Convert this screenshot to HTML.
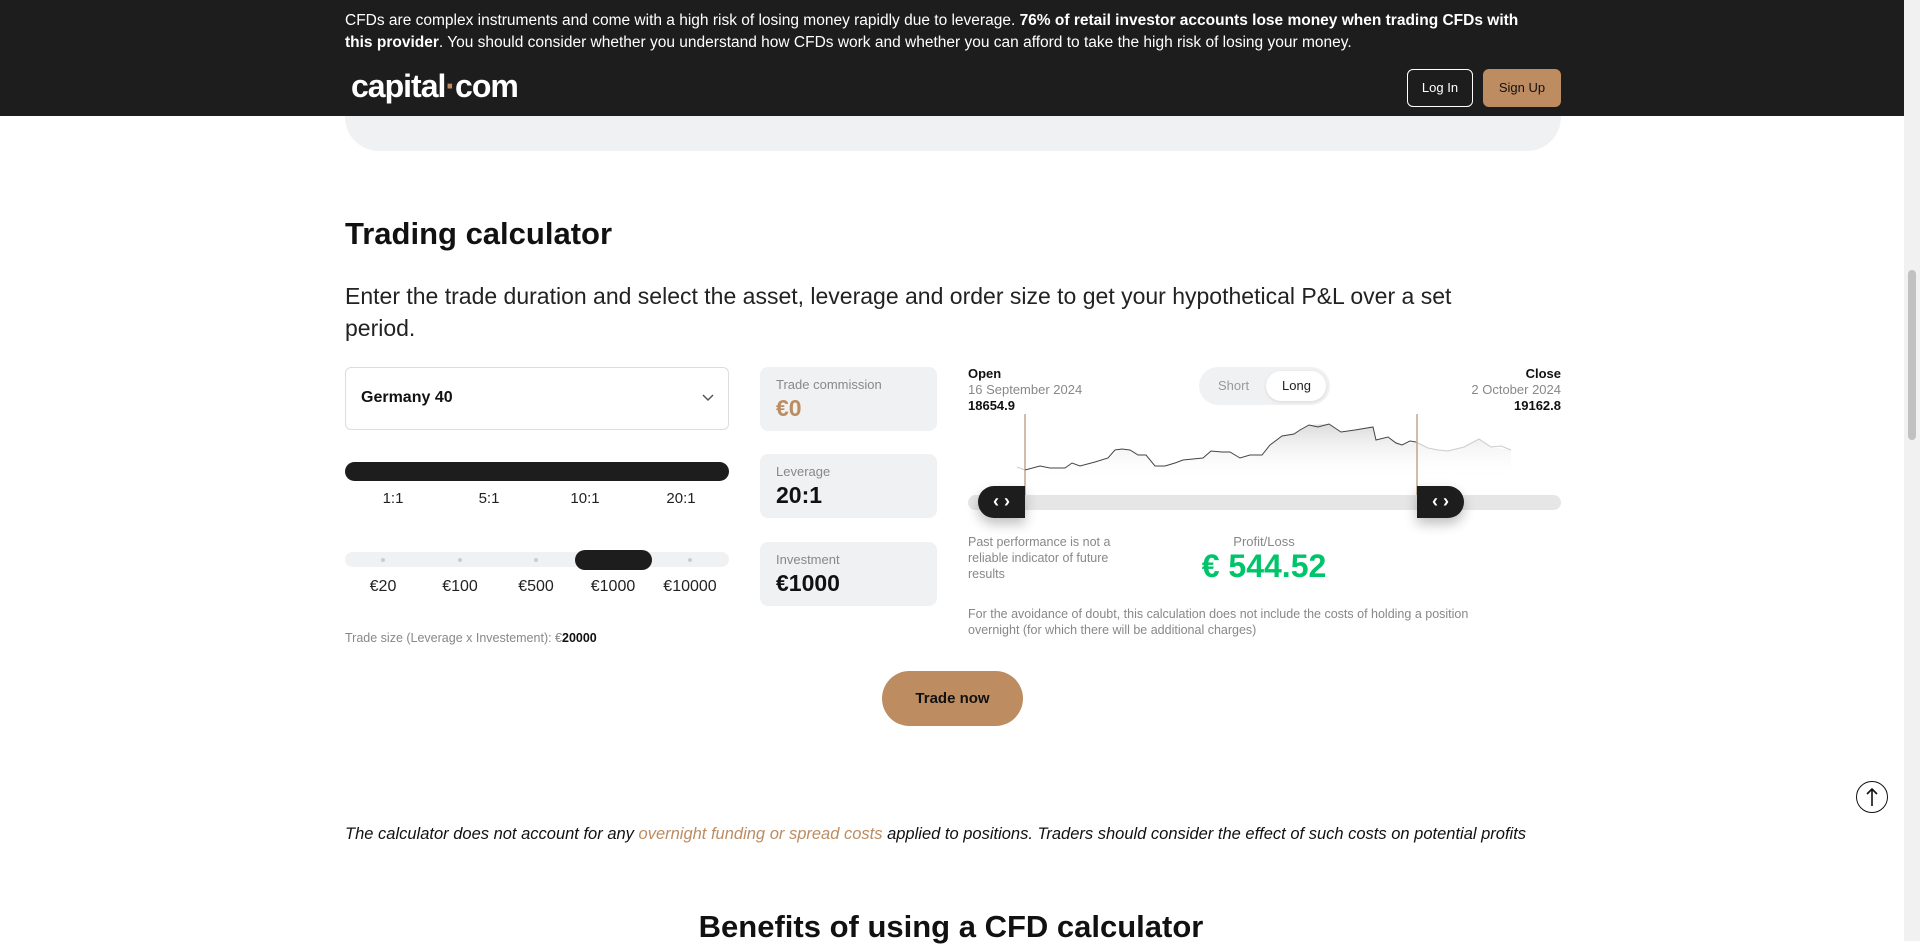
<!DOCTYPE html>
<html><head><meta charset="utf-8"><style>
*{margin:0;padding:0;box-sizing:border-box}
body{width:1920px;height:941px;overflow:hidden;background:#fff;font-family:"Liberation Sans",sans-serif;color:#111;position:relative}
.a{position:absolute;white-space:nowrap}
.hdr{position:absolute;left:0;top:0;width:1904px;height:116px;background:#1d1d1d}
.sb{position:absolute;right:0;top:0;width:16px;height:941px;background:#f1f1f1}
.sb div{position:absolute;left:4px;top:270px;width:8px;height:170px;background:#c1c1c1;border-radius:4px}
.card{position:absolute;left:760px;width:177px;height:64px;background:#f0f1f3;border-radius:8px}
.card .l{position:absolute;left:16px;top:10px;font-size:13px;color:#888}
.card .v{position:absolute;left:16px;top:28px;font-size:23px;font-weight:bold}
.lab{position:absolute;font-size:15px;color:#222;transform:translateX(-50%)}
.hd{position:absolute;width:47px;height:32px;background:#1d1d1d;box-shadow:0 6px 12px rgba(0,0,0,.25);color:#fff;font-size:18px;font-weight:bold;text-align:center;line-height:31px}
</style></head><body>
<div class="hdr"></div>
<div class="a" style="left:345px;top:10px;font-size:15.5px;line-height:22px;color:#fff">CFDs are complex instruments and come with a high risk of losing money rapidly due to leverage. <b>76% of retail investor accounts lose money when trading CFDs with<br>this provider</b>. You should consider whether you understand how CFDs work and whether you can afford to take the high risk of losing your money.</div>
<div class="a" style="left:351px;top:68px;font-size:32px;font-weight:bold;color:#fff;letter-spacing:-1px">capital<span style="color:#bd8c61">·</span>com</div>
<div class="a" style="left:1407px;top:69px;width:66px;height:38px;border:1px solid #fff;border-radius:6px;color:#fff;font-size:13px;text-align:center;line-height:36px">Log In</div>
<div class="a" style="left:1483px;top:69px;width:78px;height:38px;background:#bd8c61;border-radius:6px;color:#111;font-size:13px;text-align:center;line-height:38px">Sign Up</div>
<div class="a" style="left:345px;top:116px;width:1216px;height:35px;background:#f0f1f3;border-radius:0 0 34px 34px"></div>
<div class="sb"><div></div></div>

<div class="a" style="left:345px;top:216px;font-size:31px;font-weight:bold">Trading calculator</div>
<div class="a" style="left:345px;top:280px;font-size:23px;line-height:32px;color:#222">Enter the trade duration and select the asset, leverage and order size to get your hypothetical P&amp;L over a set<br>period.</div>

<div class="a" style="left:345px;top:367px;width:384px;height:63px;border:1px solid #ddd;border-radius:6px"></div>
<div class="a" style="left:361px;top:389px;font-size:16px;font-weight:bold">Germany 40</div>
<svg class="a" style="left:701px;top:393px" width="14" height="10"><path d="M2 2l5 5 5-5" stroke="#555" stroke-width="1.5" fill="none"/></svg>

<div class="a" style="left:345px;top:462px;width:384px;height:19px;background:#1d1d1d;border-radius:10px"></div>
<div class="lab" style="left:393px;top:490px">1:1</div>
<div class="lab" style="left:489px;top:490px">5:1</div>
<div class="lab" style="left:585px;top:490px">10:1</div>
<div class="lab" style="left:681px;top:490px">20:1</div>

<div class="a" style="left:345px;top:552px;width:384px;height:15px;background:#f0f1f3;border-radius:8px"></div>
<div class="a" style="left:381px;top:558px;width:4px;height:4px;border-radius:2px;background:#ccc"></div>
<div class="a" style="left:458px;top:558px;width:4px;height:4px;border-radius:2px;background:#ccc"></div>
<div class="a" style="left:534px;top:558px;width:4px;height:4px;border-radius:2px;background:#ccc"></div>
<div class="a" style="left:688px;top:558px;width:4px;height:4px;border-radius:2px;background:#ccc"></div>
<div class="a" style="left:575px;top:550px;width:77px;height:20px;background:#1d1d1d;border-radius:10px"></div>
<div class="lab" style="left:383px;top:578px;font-size:16px">€20</div>
<div class="lab" style="left:460px;top:578px;font-size:16px">€100</div>
<div class="lab" style="left:536px;top:578px;font-size:16px">€500</div>
<div class="lab" style="left:613px;top:578px;font-size:16px">€1000</div>
<div class="lab" style="left:690px;top:578px;font-size:16px">€10000</div>
<div class="a" style="left:345px;top:631px;font-size:12.5px;color:#888">Trade size (Leverage x Investement): €<b style="color:#111">20000</b></div>

<div class="card" style="top:367px"><div class="l">Trade commission</div><div class="v" style="color:#bd8c61">€0</div></div>
<div class="card" style="top:454px"><div class="l">Leverage</div><div class="v">20:1</div></div>
<div class="card" style="top:542px"><div class="l">Investment</div><div class="v">€1000</div></div>

<div class="a" style="left:968px;top:366px;font-size:13px;font-weight:bold">Open</div>
<div class="a" style="left:968px;top:382px;font-size:13px;color:#888">16 September 2024</div>
<div class="a" style="left:968px;top:398px;font-size:13px;font-weight:bold">18654.9</div>
<div class="a" style="right:359px;top:366px;font-size:13px;font-weight:bold">Close</div>
<div class="a" style="right:359px;top:382px;font-size:13px;color:#888">2 October 2024</div>
<div class="a" style="right:359px;top:398px;font-size:13px;font-weight:bold">19162.8</div>
<div class="a" style="left:1199px;top:367px;width:131px;height:38px;background:#f0f1f3;border-radius:19px"></div>
<div class="a" style="left:1266px;top:371px;width:60px;height:30px;background:#fff;border-radius:15px;box-shadow:0 1px 3px rgba(0,0,0,.1)"></div>
<div class="a" style="left:1218px;top:378px;font-size:13px;color:#999">Short</div>
<div class="a" style="left:1282px;top:378px;font-size:13px;color:#222">Long</div>

<svg class="a" style="left:0;top:0" width="1920" height="941">
<defs><linearGradient id="g" x1="0" y1="0" x2="0" y2="1"><stop offset="0" stop-color="#ccc" stop-opacity=".7"/><stop offset="1" stop-color="#fff" stop-opacity="0"/></linearGradient>
<linearGradient id="g2" x1="0" y1="0" x2="0" y2="1"><stop offset="0" stop-color="#e6e6e6" stop-opacity=".6"/><stop offset="1" stop-color="#fff" stop-opacity="0"/></linearGradient></defs>
<path d="M1025,470 L1065,468 1080,466 1108,458 1122,449 1130,450 1146,455 1155,466 1165,466 1183,460 1203,458 1211,451 1230,452 1240,458 1262,455 1270,445 1282,436 1294,434 1309,425 1329,424 1341,432 1373,427 1376,440 1388,437 1402,445 1416,442 L1416,480 1025,480Z" fill="url(#g)"/>
<path d="M1416,442 L1428,448 1448,451 1464,447 1479,439 1491,447 1511,450 L1511,480 1416,480Z" fill="url(#g2)"/>
<polyline points="1017,467 1025,470" fill="none" stroke="#ccc" stroke-width="1"/>
<polyline points="1025,470 1040,466 1050,468 1065,468 1072,463 1080,466 1095,462 1108,458 1115,450 1122,449 1130,450 1138,455 1146,455 1155,466 1165,466 1175,463 1183,460 1203,458 1211,451 1222,452 1230,452 1240,458 1250,455 1262,455 1270,445 1282,436 1294,434 1300,430 1309,425 1318,427 1329,424 1341,432 1355,430 1373,427 1376,440 1388,437 1396,443 1402,445 1410,441 1416,442" fill="none" stroke="#444" stroke-width="1"/>
<polyline points="1416,442 1428,448 1438,450 1448,451 1464,447 1479,439 1491,447 1501,446 1511,450" fill="none" stroke="#ccc" stroke-width="1"/>
<line x1="1025" y1="414" x2="1025" y2="502" stroke="#a07a55" stroke-width="1"/>
<line x1="1417" y1="414" x2="1417" y2="502" stroke="#a07a55" stroke-width="1"/>
</svg>
<div class="a" style="left:968px;top:495px;width:593px;height:15px;background:#e6e6e6;border-radius:8px"></div>
<div class="hd" style="left:978px;top:486px;border-radius:16px 0 0 16px">‹ ›</div>
<div class="hd" style="left:1417px;top:486px;border-radius:0 16px 16px 0">‹ ›</div>

<div class="a" style="left:968px;top:534px;font-size:12.5px;line-height:16px;color:#888;white-space:normal;width:160px">Past performance is not a reliable indicator of future results</div>
<div class="a" style="left:1264px;top:534px;transform:translateX(-50%);font-size:13px;color:#888">Profit/Loss</div>
<div class="a" style="left:1264px;top:548px;transform:translateX(-50%);font-size:32px;font-weight:bold;color:#00c46a">€ 544.52</div>
<div class="a" style="left:968px;top:606px;font-size:12.5px;line-height:16px;color:#888">For the avoidance of doubt, this calculation does not include the costs of holding a position<br>overnight (for which there will be additional charges)</div>

<div class="a" style="left:882px;top:671px;width:141px;height:55px;background:#bd8c61;border-radius:28px;text-align:center;line-height:55px;font-size:15px;font-weight:bold">Trade now</div>
<div class="a" style="left:1856px;top:781px;width:32px;height:32px;border:1.5px solid #111;border-radius:50%"></div>
<svg class="a" style="left:1856px;top:781px" width="32" height="32"><path d="M16 25V8M11 13l5-5 5 5" stroke="#111" stroke-width="1.6" fill="none"/></svg>
<div class="a" style="left:345px;top:825px;font-size:16.5px;font-style:italic;color:#111">The calculator does not account for any <span style="color:#bd8c61">overnight funding or spread costs</span> applied to positions. Traders should consider the effect of such costs on potential profits</div>
<div class="a" style="left:951px;top:909px;transform:translateX(-50%);font-size:31px;font-weight:bold">Benefits of using a CFD calculator</div>
</body></html>
